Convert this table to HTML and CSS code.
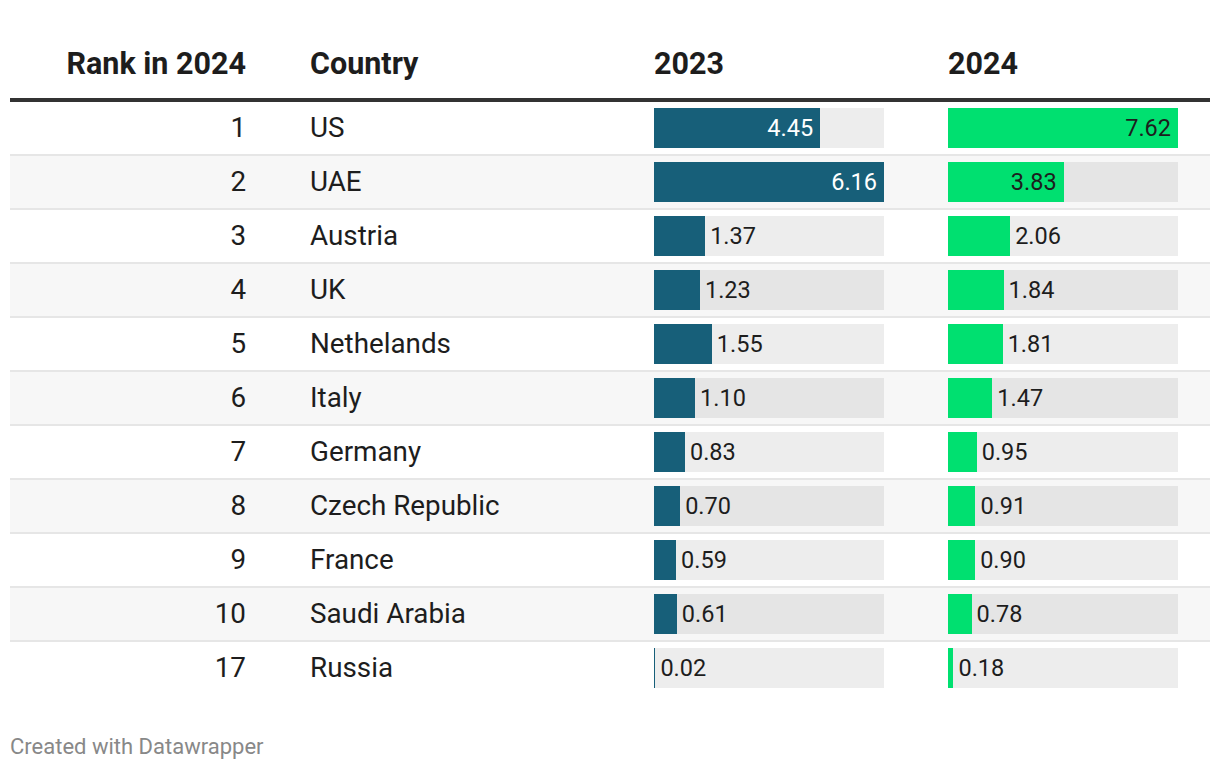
FILE: index.html
```html
<!DOCTYPE html>
<html lang="en">
<head>
<meta charset="utf-8">
<title>Rank in 2024</title>
<link rel="stylesheet" href="styles.css">
</head>
<body>
<div class="chart">
  <table class="dw">
    <colgroup>
      <col class="c-rank"><col class="c-country"><col class="c-bar"><col class="c-bar">
    </colgroup>
    <thead>
      <tr><th class="num">Rank in 2024</th><th>Country</th><th>2023</th><th>2024</th></tr>
    </thead>
    <tbody>
      <tr><td class="num">1</td><td>US</td>
        <td><div class="track"><div class="fill f23" style="width:72.24%"><span class="in">4.45</span></div></div></td>
        <td><div class="track"><div class="fill f24" style="width:100%"><span class="in">7.62</span></div></div></td></tr>
      <tr><td class="num">2</td><td>UAE</td>
        <td><div class="track"><div class="fill f23" style="width:100%"><span class="in">6.16</span></div></div></td>
        <td><div class="track"><div class="fill f24" style="width:50.26%"><span class="in">3.83</span></div></div></td></tr>
      <tr><td class="num">3</td><td>Austria</td>
        <td><div class="track"><div class="fill f23" style="width:22.24%"></div><span class="out">1.37</span></div></td>
        <td><div class="track"><div class="fill f24" style="width:27.03%"></div><span class="out">2.06</span></div></td></tr>
      <tr><td class="num">4</td><td>UK</td>
        <td><div class="track"><div class="fill f23" style="width:19.97%"></div><span class="out">1.23</span></div></td>
        <td><div class="track"><div class="fill f24" style="width:24.15%"></div><span class="out">1.84</span></div></td></tr>
      <tr><td class="num">5</td><td>Nethelands</td>
        <td><div class="track"><div class="fill f23" style="width:25.16%"></div><span class="out">1.55</span></div></td>
        <td><div class="track"><div class="fill f24" style="width:23.75%"></div><span class="out">1.81</span></div></td></tr>
      <tr><td class="num">6</td><td>Italy</td>
        <td><div class="track"><div class="fill f23" style="width:17.86%"></div><span class="out">1.10</span></div></td>
        <td><div class="track"><div class="fill f24" style="width:19.29%"></div><span class="out">1.47</span></div></td></tr>
      <tr><td class="num">7</td><td>Germany</td>
        <td><div class="track"><div class="fill f23" style="width:13.47%"></div><span class="out">0.83</span></div></td>
        <td><div class="track"><div class="fill f24" style="width:12.47%"></div><span class="out">0.95</span></div></td></tr>
      <tr><td class="num">8</td><td>Czech Republic</td>
        <td><div class="track"><div class="fill f23" style="width:11.36%"></div><span class="out">0.70</span></div></td>
        <td><div class="track"><div class="fill f24" style="width:11.94%"></div><span class="out">0.91</span></div></td></tr>
      <tr><td class="num">9</td><td>France</td>
        <td><div class="track"><div class="fill f23" style="width:9.58%"></div><span class="out">0.59</span></div></td>
        <td><div class="track"><div class="fill f24" style="width:11.81%"></div><span class="out">0.90</span></div></td></tr>
      <tr><td class="num">10</td><td>Saudi Arabia</td>
        <td><div class="track"><div class="fill f23" style="width:9.90%"></div><span class="out">0.61</span></div></td>
        <td><div class="track"><div class="fill f24" style="width:10.24%"></div><span class="out">0.78</span></div></td></tr>
      <tr><td class="num">17</td><td>Russia</td>
        <td><div class="track"><div class="fill f23" style="width:0.6%"></div><span class="out">0.02</span></div></td>
        <td><div class="track"><div class="fill f24" style="width:2.36%"></div><span class="out">0.18</span></div></td></tr>
    </tbody>
  </table>
  <div class="footer">Created with Datawrapper</div>
</div>
</body>
</html>
```
FILE: styles.css
```css
html, body {
  margin: 0;
  padding: 0;
  background: #ffffff;
}
body {
  font-family: Roboto, "Liberation Sans", Arial, sans-serif;
  color: #1d1d1d;
}
.chart {
  padding: 10px;
}
.dw {
  width: 1200px;
  table-layout: fixed;
  border-collapse: separate;
  border-spacing: 0;
}
.c-rank { width: 268px; }
.c-country { width: 344px; }
.c-bar { width: 294px; }

.dw th {
  font-size: 30.5px;
  font-weight: 700;
  line-height: 36px;
  text-align: left;
  padding: 36px 32px 16px;
  border-bottom: 4px solid #333333;
  color: #1d1d1d;
  white-space: nowrap;
}
.dw td {
  font-size: 27.8px;
  line-height: 40px;
  padding: 6px 32px;
  vertical-align: middle;
  border-bottom: 2px solid #e6e6e6;
  white-space: nowrap;
}
.dw tbody tr:last-child td {
  border-bottom: none;
}
.dw tbody tr:nth-child(even) td {
  background: #f7f7f7;
}
.dw .num {
  text-align: right;
}
.track {
  display: flex;
  align-items: center;
  width: 230px;
  height: 40px;
  background: rgba(0, 0, 0, 0.07);
}
.fill {
  height: 100%;
  flex-shrink: 0;
  display: flex;
  align-items: center;
  justify-content: flex-end;
  min-width: 1px;
}
.f23 { background: #175f79; }
.f24 { background: #00e070; }
.in, .out {
  font-size: 23.5px;
  line-height: 40px;
}
.in {
  padding-right: 7px;
}
.f23 .in { color: #ffffff; }
.f24 .in { color: #1d1d1d; }
.out {
  margin-left: 5px;
  color: #1d1d1d;
}
.footer {
  margin-top: 41px;
  font-size: 22px;
  line-height: 24px;
  color: #888888;
}
```
